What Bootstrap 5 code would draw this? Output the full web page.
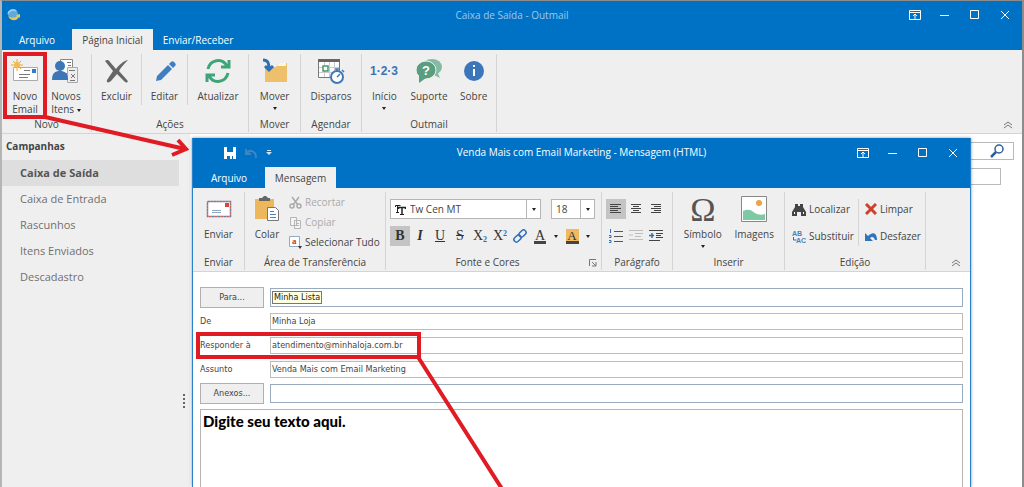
<!DOCTYPE html>
<html lang="pt-BR">
<head>
<meta charset="utf-8">
<meta name="viewport" content="width=device-width, initial-scale=1">
<title>Caixa de Saída - Outmail</title>
<link href="https://cdn.jsdelivr.net/npm/bootstrap@5.3.0/dist/css/bootstrap.min.css" rel="stylesheet">
<script src="https://cdn.jsdelivr.net/npm/bootstrap@5.3.0/dist/js/bootstrap.bundle.min.js" defer></script>
<style>
:root{--blue:#0072c6;--bg:#efefef;--line:#d4d4d4;--ink:#444;--red:#e01b24}
body{font:10px/13px "Open Sans","Noto Sans",sans-serif;color:var(--ink);background:#fff}
svg{display:block;flex:none}
button,select,input,textarea{font:inherit;color:inherit}
.app{min-height:100vh;border:1px solid #8c8c8c;border-width:1px 2px 0 2px;border-left-color:#b5b5b5}
.titlebar{background:var(--blue);color:#fff;height:49px}
.app-title{color:#9cc9ec}
.title-row{height:28px}
.win-title{left:0;right:0;text-align:center}
.tab-link{background:none;border:0;color:#fff;padding:0;height:21px;line-height:23px;text-align:center}
.tab-link.current{background:var(--bg);color:var(--ink)}
.win-btns{gap:12px;padding-right:8px;z-index:1}
.win-btns button,.plain{background:none;border:0;padding:0;color:inherit}
.win-btns button{width:18px;height:18px;display:grid;place-items:center}
.ribbon{background:var(--bg);height:84px;border-bottom:1px solid var(--line);padding-top:4px}
.group{position:relative;height:78px;border-right:1px solid var(--line);display:flex;flex-direction:column;justify-content:space-between;flex:none}
.caption{text-align:center;line-height:15px}
.big{background:none;border:0;padding:4px 0 0;display:flex;flex-direction:column;align-items:center;flex:1 1 0;line-height:13px;white-space:nowrap}
.big svg.ico{margin-bottom:6px}
.big.cut{border-right:1px solid var(--line);height:51px}
.big.w36{flex:0 0 36px}.big.w44{flex:0 0 44px}.big.w46{flex:0 0 46px}.big.w50{flex:0 0 50px}
.caret{width:0;height:0;border:2px solid transparent;border-top:3px solid #222;border-bottom:0;display:inline-block}
.g-90{width:90px}.g-157{width:157px}.g-52{width:52px}.g-61{width:61px}.g-135{width:135px}
.g-141{width:141px}.g-216{width:216px}.g-71{width:71px}.g-112{width:112px}
.sidebar{width:188px;background:var(--bg)}
.sidebar h2{font-size:10px;line-height:13px;padding:6px 4px 7px;font-weight:700}
.folder{display:block;font-size:11px;line-height:26px;padding-left:18px;width:177px;color:#707070;text-decoration:none}
.folder.current{background:#dedede;font-weight:700;color:#555}
.splitter{margin-top:104px}
.search{height:18px;border:1px solid #b9b9b9;width:200px}
.search input{border:0;min-width:0;background:none}
.filter{height:17px;border:1px solid #b9b9b9;width:200px;margin-right:13px}
.compose{position:absolute;left:192px;right:53px;top:138px;bottom:0;background:#fff;border:1px solid #2a82cc;border-bottom:0;border-top:0;box-shadow:0 0 3px rgba(0,0,0,.45);overflow:hidden}
.compose .titlebar{height:50px}
.compose .title-row{height:29px}
.quick{padding-left:31px}
.small-btn{background:none;border:0;padding:0;display:flex;align-items:center;gap:3px;height:20px;white-space:nowrap}
.small-btn:disabled{color:#aaa}
.tools{padding:7px 6px 0 4px}
.tools-row{margin-top:7px}
.pick{display:flex;align-items:center;border:1px solid #b5b5b5;background:#fff;height:20px}
.pick.face{width:151px}.pick.size{width:44px}
.pick select{appearance:none;border:0;background:none;padding:0 4px;flex:1;min-width:0;height:18px;line-height:18px}
.pick .drop{width:14px;height:18px;border-left:1px solid #b5b5b5;display:grid;place-items:center}
.tool{width:20px;height:20px;padding:0;border:0;background:none;display:grid;place-items:center;font:14px/20px "Liberation Serif",serif;color:#333}
.tool.on{background:#c4c4c4}
.tool sub,.tool sup{font-size:8px;color:#2b6cb0;font-weight:700}
.edit-cols{padding:7px 0 0 7px}
.edit-cols>div{gap:7px}
.edit-main{flex:0 0 67px;border-right:1px solid var(--line)}
.edit-more{padding-left:6px}
.fields{padding:13px 7px 0}
.frow{display:grid;grid-template-columns:64px 1fr;column-gap:6px;align-items:center;height:24px}
.frow,.frow button,.frow input{font-family:"DejaVu Sans Condensed","DejaVu Sans",sans-serif;font-size:9px}
.frow button{height:21px;border:1px solid #b0b0b0;background:#efefef;padding:0;color:#444}
.box{height:17px;border:1px solid #bdbdb8;padding:0 1px;width:100%;min-width:0;background:#fff;color:#444}
.box.strong{height:19px;border-color:#9aabbf}
.chip{border:1px solid #777;background:#ffffe1;padding:0 1px;line-height:11px;color:#222}
.editor{flex:1;resize:none;border:1px solid #b5b5b5;border-bottom:0;margin:4px 7px 0;padding:2px;font:900 15px/18px Lato,sans-serif;color:#000;border-radius:0}
.notes{position:absolute;left:0;top:0;pointer-events:none;z-index:5}
</style>
</head>
<body>
<div class="app position-relative d-flex flex-column overflow-hidden">
  <header class="titlebar">
    <div class="title-row position-relative d-flex align-items-center justify-content-between ps-1">
      <svg width="16" height="14" viewBox="0 0 16 14"><circle cx="7" cy="6" r="5" fill="#5fa9dc"/><path d="M2 6a5 5 0 0 1 8-3" stroke="#a5d0ee" stroke-width="1.500" fill="none"/><path d="M2 8c3 6 9 5 11 1l1 1 0-4-4 1 1 1c-2 2-6 2-9 0z" fill="#e9c65a"/></svg>
      <div class="win-title app-title position-absolute">Caixa de Saída - Outmail</div>
      <div class="win-btns d-flex">
        <button type="button" aria-label="Opções da faixa"><svg width="12" height="10" fill="none" stroke="#fff"><path d="M.5.5h11v9H.5zM1 2.500h10M6 9V4M4 6l2-2 2 2"/></svg></button>
        <button type="button" aria-label="Minimizar"><svg width="10" height="10" stroke="#fff"><path d="M0 5.500h9"/></svg></button>
        <button type="button" aria-label="Maximizar"><svg width="10" height="10" fill="none" stroke="#fff"><path d="M.5.5h8v8h-8z"/></svg></button>
        <button type="button" aria-label="Fechar"><svg width="10" height="10" stroke="#fff"><path d="M1 1l8 8M9 1l-8 8"/></svg></button>
      </div>
    </div>
    <nav class="d-flex" aria-label="Guias">
      <button type="button" class="tab-link" style="width:70px">Arquivo</button>
      <button type="button" class="tab-link current" style="width:81px">Página Inicial</button>
      <button type="button" class="tab-link" style="width:90px">Enviar/Receber</button>
    </nav>
  </header>

  <div class="ribbon d-flex position-relative">
    <section class="group g-90">
      <div class="d-flex">
        <button type="button" class="big w46">
          <svg class="ico" width="28" height="26" viewBox="0 0 28 26"><path d="M2.500 9.500h24v13h-24z" fill="#fff" stroke="#aaa"/><path d="M13 12.500h6M8 16.500h11M8 19.500h9" stroke="#777"/><path d="M21 11h4v4h-4z" fill="#2b7cd3"/><path d="M6 1v12M0 7h12M2 3l8 8M10 3l-8 8" stroke="#eba83a"/><circle cx="6" cy="7" r="3" fill="#f6b94f"/></svg>
          Novo<br>Email</button>
        <button type="button" class="big w36">
          <svg class="ico" width="28" height="26" viewBox="0 0 28 26"><path d="M8.500 1.500h12v14h-12z" fill="#fff" stroke="#888"/><path d="M15.500 9.500h10v15h-10z" fill="#eee" stroke="#aaa"/><path d="M17 12.500h6M19 16l4 4M23 16l-4 4M18 22.500h5" stroke="#777"/><path d="M15 4.500h4M16 7.500h3" stroke="#777"/><circle cx="8" cy="8" r="5" fill="#3b76b8"/><path d="M0 22c0-7 3-9 8-9s8 2 8 9z" fill="#3b76b8"/></svg>
          Novos<span>Itens <span class="caret align-middle"></span></span></button>
      </div>
      <div class="caption">Novo</div>
    </section>
    <section class="group g-157">
      <div class="d-flex">
        <button type="button" class="big cut w50">
          <svg class="ico" width="26" height="26" viewBox="0 0 26 26"><path d="M1 3C3 1 5 2 6 4l6 7c3-4 7-8 12-9-3 3-7 7-9 11l8 9c2 2 0 3-2 2l-8-8-6 7c-2 2-5 2-4-1l6-9z" fill="#666"/></svg>Excluir</button>
        <button type="button" class="big cut w46">
          <svg class="ico" width="22" height="26" viewBox="0 0 22 26"><path d="M3 18L14 7l4 4L7 22l-5 1zM15 6l2-2c1-1 2-1 3 0l1 1c1 1 1 2 0 3l-2 2z" fill="#3f7fc1"/></svg>Editar</button>
        <button type="button" class="big">
          <svg class="ico" width="28" height="26" viewBox="0 0 28 26" fill="none" stroke="#3fa578" stroke-width="3"><path d="M4 11C6 2 18-1 23 8M25 2v7h-8M24 15c-2 9-14 12-19 3M3 24v-7h8"/></svg>Atualizar</button>
      </div>
      <div class="caption">Ações</div>
    </section>
    <section class="group g-52">
      <div class="d-flex"><button type="button" class="big">
        <svg class="ico" width="28" height="26" viewBox="0 0 28 26"><path d="M4 9h11l3-4h8v19H4z" fill="#eec06c"/><path d="M18 5h7v3h-9z" fill="#fff6df"/><path d="M2 2c5 0 6 3 6 9M4 8l4 4 4-4" stroke="#2f6fb5" stroke-width="3" fill="none"/></svg>
        Mover<span class="caret mt-1"></span></button></div>
      <div class="caption">Mover</div>
    </section>
    <section class="group g-61">
      <div class="d-flex"><button type="button" class="big">
        <svg class="ico" width="28" height="26" viewBox="0 0 28 26"><path d="M1.500 1.500h21v18h-21z" fill="#fff" stroke="#777"/><path d="M1 1h22v3H1z" fill="#666"/><path d="M2 9.500h20M2 14.500h20M7.500 4v15M12.500 4v15M17.500 4v15" stroke="#ccc"/><path d="M6 8h5v5H6z" fill="#fff" stroke="#469a72" stroke-width="1.500"/><circle cx="20" cy="19" r="6" fill="#fff" stroke="#3f78b8" stroke-width="2"/><path d="M18 11h4M20 11v2M20 19l3-3M25 12l2 2" stroke="#3f78b8" stroke-width="1.500"/></svg>
        Disparos</button></div>
      <div class="caption">Agendar</div>
    </section>
    <section class="group g-135">
      <div class="d-flex">
        <button type="button" class="big"><svg class="ico" width="28" height="26" viewBox="0 0 28 26"><text x="14" y="17" text-anchor="middle" font-family="Liberation Sans" font-weight="700" font-size="12" fill="#3a73b4">1·2·3</text></svg>Início<span class="caret mt-1"></span></button>
        <button type="button" class="big"><svg class="ico" width="28" height="26" viewBox="0 0 28 26"><ellipse cx="17" cy="9" rx="10" ry="8" fill="#86b9a2"/><path d="M22 13l3 7-8-4z" fill="#86b9a2"/><ellipse cx="11" cy="12" rx="10" ry="9" fill="#5a9e80" stroke="#efefef"/><path d="M4 17v8l7-5z" fill="#5a9e80"/><text x="11" y="17" text-anchor="middle" font-family="Liberation Sans" font-weight="700" font-size="13" fill="#fff">?</text></svg>Suporte</button>
        <button type="button" class="big"><svg class="ico" width="22" height="26" viewBox="0 0 22 26"><circle cx="11" cy="13" r="10" fill="#3c76ba"/><path d="M10 11h2v7h-2zM10 7h2v2h-2z" fill="#fff"/></svg>Sobre</button>
      </div>
      <div class="caption">Outmail</div>
    </section>
    <button type="button" class="plain ms-auto align-self-end mb-1 me-2" aria-label="Recolher"><svg width="11" height="8" fill="none" stroke="#777"><path d="M1 4l4-3 4 3M1 7l4-3 4 3"/></svg></button>
  </div>

  <main class="d-flex flex-grow-1">
    <aside class="sidebar flex-shrink-0">
      <h2 class="m-0">Campanhas</h2>
      <nav aria-label="Campanhas">
        <a class="folder current" href="#">Caixa de Saída</a>
        <a class="folder" href="#">Caixa de Entrada</a>
        <a class="folder" href="#">Rascunhos</a>
        <a class="folder" href="#">Itens Enviados</a>
        <a class="folder" href="#">Descadastro</a>
      </nav>
      <svg class="splitter ms-auto me-1" width="4" height="14" stroke="#666" stroke-width="2" stroke-dasharray="2 2"><path d="M2 0v14"/></svg>
    </aside>
    <div class="flex-grow-1 d-flex flex-column align-items-end gap-2 pt-2 pe-2">
      <label class="search d-flex align-items-center justify-content-end pe-2"><input class="flex-grow-1" type="search" aria-label="Pesquisar"><svg width="15" height="14" fill="none" stroke="#2b5f9e"><circle cx="9" cy="5" r="4" stroke-width="1.500"/><path d="M6 8l-5 5" stroke-width="2.500"/></svg></label>
      <input class="filter" type="text" aria-label="Filtro">
    </div>
  </main>
</div>

<div class="compose d-flex flex-column" role="dialog" aria-label="Mensagem">
  <header class="titlebar flex-shrink-0">
    <div class="title-row position-relative d-flex align-items-center justify-content-between">
      <div class="quick d-flex align-items-center gap-2">
        <svg width="12" height="12"><path d="M0 0h12v12H0z" fill="#fff"/><path d="M3 0h6v5H3zM3 9h6v3H3z" fill="#0072c6"/><path d="M6 9h2v3H6z" fill="#fff"/></svg>
        <svg width="14" height="12" fill="none" stroke="#3f86c0" stroke-width="2"><path d="M2 2v5h5M2 7c3-5 10-4 10 4"/></svg>
        <svg width="6" height="6" fill="#cfe4f5"><path d="M1 0h4v1H1zM0 2h6L3 5z"/></svg>
      </div>
      <div class="win-title position-absolute">Venda Mais com Email Marketing - Mensagem (HTML)</div>
      <div class="win-btns d-flex">
        <button type="button" aria-label="Opções da faixa"><svg width="12" height="10" fill="none" stroke="#fff"><path d="M.5.5h11v9H.5zM1 2.500h10M6 9V4M4 6l2-2 2 2"/></svg></button>
        <button type="button" aria-label="Minimizar"><svg width="10" height="10" stroke="#fff"><path d="M0 5.500h9"/></svg></button>
        <button type="button" aria-label="Maximizar"><svg width="10" height="10" fill="none" stroke="#fff"><path d="M.5.5h8v8h-8z"/></svg></button>
        <button type="button" aria-label="Fechar"><svg width="10" height="10" stroke="#fff"><path d="M1 1l8 8M9 1l-8 8"/></svg></button>
      </div>
    </div>
    <nav class="d-flex" aria-label="Guias da mensagem">
      <button type="button" class="tab-link" style="width:72px">Arquivo</button>
      <button type="button" class="tab-link current" style="width:71px">Mensagem</button>
    </nav>
  </header>

  <div class="ribbon d-flex flex-shrink-0 position-relative">
    <section class="group g-52">
      <div class="d-flex"><button type="button" class="big">
        <svg class="ico" width="28" height="26" viewBox="0 0 28 26"><path d="M2.500 5.500h23v15h-23z" fill="#fff" stroke="#5a82b4" stroke-width="1.500" stroke-dasharray="3 3"/><path d="M2.500 5.500h23v15h-23z" fill="none" stroke="#c9605a" stroke-width="1.500" stroke-dasharray="3 3" stroke-dashoffset="3"/><path d="M20 7h4v4h-4z" fill="#d9443a"/><path d="M7 14.500h9M7 16.500h9" stroke="#8ba6c5"/></svg>Enviar</button></div>
      <div class="caption">Enviar</div>
    </section>
    <section class="group g-141">
      <div class="d-flex">
        <button type="button" class="big w44"><svg class="ico" width="26" height="26" viewBox="0 0 26 26"><path d="M1 3h19v20H1z" fill="#edb75c"/><path d="M5 5V2h3l2-2h2l2 2h2v3z" fill="#666"/><path d="M13.500 11.500h8l3 3v10h-11z" fill="#fff" stroke="#777"/><path d="M16 15.500h4M16 18.500h6M16 21.500h6" stroke="#4a82bd"/></svg>Colar</button>
        <div class="d-flex flex-column">
          <button type="button" class="small-btn" disabled><svg width="13" height="13" fill="none" stroke="#aaa" stroke-width="1.500"><path d="M3 1l6 8M10 1L4 9"/><circle cx="3" cy="10" r="2"/><circle cx="10" cy="10" r="2"/></svg>Recortar</button>
          <button type="button" class="small-btn" disabled><svg width="13" height="13" fill="#f4f4f4" stroke="#b5b5b5"><path d="M1.500 1.500h6v8h-6zM5.500 4.500h6v8h-6zM7 7.500h3M7 9.500h3"/></svg>Copiar</button>
          <button type="button" class="small-btn"><svg width="13" height="13"><path d="M.5.5h10v10H.5z" fill="#fff" stroke="#8fabc8"/><text x="3" y="8" font-family="Liberation Serif" font-weight="700" font-size="9" fill="#c33">a</text><path d="M9 10h4l-2 3z" fill="#333"/></svg>Selecionar Tudo</button>
        </div>
      </div>
      <div class="caption">Área de Transferência</div>
    </section>
    <section class="group g-216">
      <div class="tools">
        <div class="d-flex" style="gap:10px">
          <div class="pick face ps-1"><svg width="11" height="11" fill="none" stroke="#222"><path d="M.5 3V1.500h5M2.500 2v6M1 8.500h3"/><path d="M3.500 5V3.500h7V5M7 4v6" stroke-width="1.500"/><path d="M5 10.500h4"/></svg><select aria-label="Fonte"><option>Tw Cen MT</option></select><span class="drop"><i class="caret"></i></span></div>
          <div class="pick size"><select aria-label="Tamanho"><option>18</option></select><span class="drop"><i class="caret"></i></span></div>
        </div>
        <div class="tools-row d-flex align-items-center">
          <button type="button" class="tool on fw-bold">B</button>
          <button type="button" class="tool fst-italic fw-bold">I</button>
          <button type="button" class="tool text-decoration-underline">U</button>
          <button type="button" class="tool text-decoration-line-through">S</button>
          <button type="button" class="tool"><span>X<sub>2</sub></span></button>
          <button type="button" class="tool"><span>X<sup>2</sup></span></button>
          <button type="button" class="tool" aria-label="Link"><svg width="16" height="16" viewBox="0 0 16 16" fill="none" stroke="#2f6fb5" stroke-width="1.500"><rect x="-4" y="-2.500" width="8" height="5" rx="2.500" transform="translate(5.500 10.500) rotate(-45)"/><rect x="-4" y="-2.500" width="8" height="5" rx="2.500" transform="translate(10.500 5.500) rotate(-45)"/></svg></button>
          <button type="button" class="tool" aria-label="Cor do texto"><svg width="14" height="15"><text x="7" y="11" text-anchor="middle" font-family="Liberation Serif" font-size="14" fill="#333">A</text><path d="M1 12h12v3H1z" fill="#444"/></svg></button>
          <i class="caret mx-1"></i>
          <button type="button" class="tool" aria-label="Cor de realce"><svg width="13" height="15"><path d="M0 0h13v12H0z" fill="#f0b95e"/><text x="6" y="11" text-anchor="middle" font-family="Liberation Serif" font-size="13" fill="#333">A</text><path d="M0 12h13v3H0z" fill="#444"/></svg></button>
          <i class="caret ms-1"></i>
        </div>
      </div>
      <div class="caption d-flex justify-content-center align-items-center"><span class="flex-grow-1">Fonte e Cores</span><svg class="me-1" width="8" height="8" fill="none" stroke="#777"><path d="M.5 7V.5H7M3 3l4 4M7 3v4H3"/></svg></div>
    </section>
    <section class="group g-71">
      <div class="tools">
        <div class="d-flex">
          <button type="button" class="tool on" aria-label="Esquerda"><svg width="12" height="10" stroke="#444"><path d="M0 .5h11M0 2.500h8M0 4.500h11M0 6.500h8M0 8.500h11"/></svg></button>
          <button type="button" class="tool" aria-label="Centro"><svg width="12" height="10" stroke="#444"><path d="M1 .5h10M3 2.500h6M1 4.500h10M3 6.500h6M1 8.500h10"/></svg></button>
          <button type="button" class="tool" aria-label="Direita"><svg width="12" height="10" stroke="#444"><path d="M1 .5h10M4 2.500h7M1 4.500h10M4 6.500h7M1 8.500h10"/></svg></button>
        </div>
        <div class="tools-row d-flex">
          <button type="button" class="tool" aria-label="Lista"><svg width="14" height="14"><path d="M5 2.500h9M5 7.500h9M5 12.500h9" stroke="#555"/><path d="M1.500 0v4M0 6.500h2v2H0M0 11.500h2v2H0" fill="none" stroke="#2f6fb5"/></svg></button>
          <button type="button" class="tool" aria-label="Diminuir recuo"><svg width="14" height="12" stroke="#bdbdbd"><path d="M0 .5h14M6 3.500h8M6 6.500h6M0 9.500h14M0 5h4"/></svg></button>
          <button type="button" class="tool" aria-label="Aumentar recuo"><svg width="14" height="12" stroke="#444"><path d="M0 .5h14M7 3.500h7M7 5.500h5M7 7.500h7M0 10.500h11"/><path d="M0 5.500h5M3 3v5" stroke="#2f6fb5" stroke-width="1.500"/></svg></button>
        </div>
      </div>
      <div class="caption">Parágrafo</div>
    </section>
    <section class="group g-112">
      <div class="d-flex px-1">
        <button type="button" class="big"><svg class="ico overflow-visible" width="28" height="26" viewBox="0 0 28 26"><text x="14" y="25" text-anchor="middle" font-family="Liberation Serif" font-size="34" fill="#555">Ω</text></svg>Símbolo<span class="caret mt-1"></span></button>
        <button type="button" class="big"><svg class="ico" width="26" height="26" viewBox="0 0 26 26"><path d="M.5.5h25v25H.5z" fill="#fff" stroke="#888"/><circle cx="18" cy="7" r="3" fill="#efa24a"/><path d="M2 15c6-3 9 0 12 2s7 2 10 1v6H2z" fill="#7cc9a4"/></svg>Imagens</button>
      </div>
      <div class="caption">Inserir</div>
    </section>
    <section class="group g-141">
      <div class="edit-cols d-flex">
        <div class="edit-main d-flex flex-column">
          <button type="button" class="small-btn"><svg width="14" height="13" fill="#444"><path d="M3 1h3v2h2V1h3v3l3 5v4H9V9H5v4H0V9l3-5z"/><path d="M2 9h1v2H2zM11 9h1v2h-1z" fill="#fff"/></svg>Localizar</button>
          <button type="button" class="small-btn"><svg width="14" height="15"><text x="0" y="7" font-family="Liberation Sans" font-size="7" font-weight="700" fill="#4b80bd">AB</text><text x="4" y="14" font-family="Liberation Sans" font-size="7" font-weight="700" fill="#4b80bd">AC</text><path d="M1.500 8v3h3" fill="none" stroke="#2f6fb5"/></svg>Substituir</button>
        </div>
        <div class="edit-more d-flex flex-column">
          <button type="button" class="small-btn"><svg width="12" height="12" stroke="#cf3f2c" stroke-width="3"><path d="M1 1l10 10M11 1L1 11"/></svg>Limpar</button>
          <button type="button" class="small-btn"><svg width="12" height="12"><path d="M0 3v8h8L5 8c2-2 4-1 5 2h2C12 3 8 1 3 6z" fill="#3174bb"/></svg>Desfazer</button>
        </div>
      </div>
      <div class="caption">Edição</div>
    </section>
    <button type="button" class="plain ms-auto align-self-end mb-1 me-2" aria-label="Recolher"><svg width="11" height="8" fill="none" stroke="#777"><path d="M1 4l4-3 4 3M1 7l4-3 4 3"/></svg></button>
  </div>

  <form class="fields">
    <div class="frow"><button type="button">Para...</button><div class="box strong d-flex align-items-center"><span class="chip">Minha Lista</span></div></div>
    <div class="frow"><label for="de">De</label><input class="box" id="de" value="Minha Loja"></div>
    <div class="frow"><label for="resp">Responder à</label><input class="box" id="resp" value="atendimento@minhaloja.com.br"></div>
    <div class="frow"><label for="assunto">Assunto</label><input class="box" id="assunto" value="Venda Mais com Email Marketing"></div>
    <div class="frow"><button type="button">Anexos...</button><input class="box strong" aria-label="Anexos"></div>
  </form>
  <textarea class="editor" aria-label="Texto da mensagem">Digite seu texto aqui.</textarea>
</div>

<svg class="notes" width="520" height="487" fill="none" stroke="#e01b24" stroke-width="4" aria-hidden="true">
  <path d="M5 54h40v63H5zM45 117l140 32M178 140l8 9-14 6"/>
  <path d="M198 334h221v23H198zM418 357l86 135"/>
</svg>
</body>
</html>
